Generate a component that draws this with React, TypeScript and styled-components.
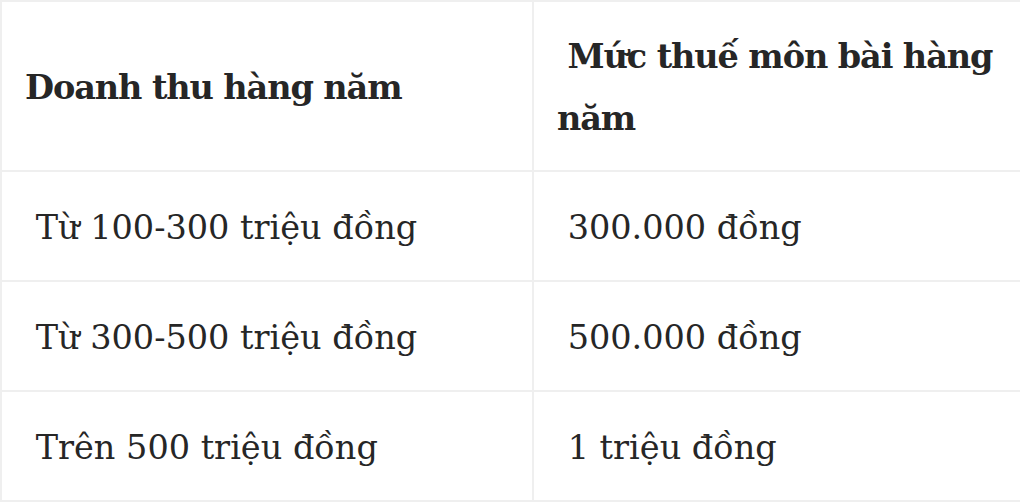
import React from "react";
import styled, { createGlobalStyle } from "styled-components";

const GlobalStyle = createGlobalStyle`
  html, body {
    margin: 0;
    padding: 0;
    background: #ffffff;
    overflow: hidden;
  }
`;

const Table = styled.table`
  width: 1034px;
  table-layout: fixed;
  border-collapse: collapse;
  font-family: "DejaVu Serif", "Liberation Serif", serif;
  color: #262626;
  font-size: 33.5px;
  line-height: 62px;
`;

const Cell = styled.td<{ $head?: boolean }>`
  border: 2px solid #efefef;
  padding: ${(p) => (p.$head ? "24px 24px 20px 23px" : "25px 24px 21px 23px")};
  font-weight: ${(p) => (p.$head ? 700 : 400)};
  letter-spacing: ${(p) => (p.$head ? "-1.1px" : "0")};
  vertical-align: middle;
  white-space: pre-wrap;
`;

const rows = [
  [" Từ 100-300 triệu đồng", " 300.000 đồng"],
  [" Từ 300-500 triệu đồng", " 500.000 đồng"],
  [" Trên 500 triệu đồng", " 1 triệu đồng"],
];

export default function App() {
  return (
    <>
      <GlobalStyle />
      <Table>
        <colgroup>
          <col style={{ width: 532 }} />
          <col style={{ width: 502 }} />
        </colgroup>
        <tbody>
          <tr>
            <Cell $head>Doanh thu hàng năm</Cell>
            <Cell $head>{" Mức thuế môn bài hàng năm"}</Cell>
          </tr>
          {rows.map((r) => (
            <tr key={r[0]}>
              <Cell>{r[0]}</Cell>
              <Cell>{r[1]}</Cell>
            </tr>
          ))}
        </tbody>
      </Table>
    </>
  );
}
